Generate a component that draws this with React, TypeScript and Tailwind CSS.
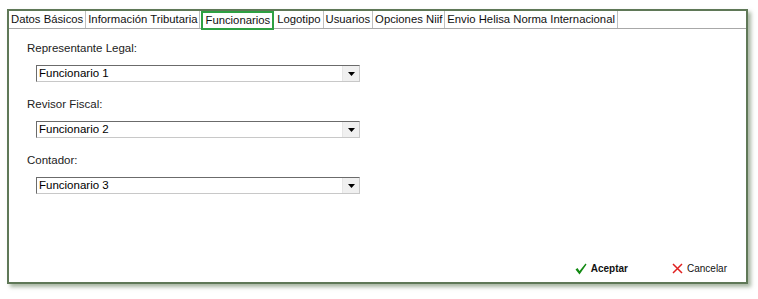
import React from 'react'

const tabs = [
  'Datos Básicos',
  'Información Tributaria',
  'Funcionarios',
  'Logotipo',
  'Usuarios',
  'Opciones Niif',
  'Envio Helisa Norma Internacional',
]

const fields = [
  { label: 'Representante Legal:', value: 'Funcionario 1' },
  { label: 'Revisor Fiscal:', value: 'Funcionario 2' },
  { label: 'Contador:', value: 'Funcionario 3' },
]

const Select = ({ value }: { value: string }) => (
  <div className="ml-[9px] flex h-[17px] w-[324px] items-center border border-t-[#6b6b6b] border-l-[#6b6b6b] border-r-[#c8c8c8] border-b-[#c8c8c8] bg-white">
    <span className="flex-1 pl-[2px] text-[11.5px] leading-none text-black">{value}</span>
    <span className="flex h-full w-[17px] items-center justify-center border-l border-[#e6e6e6] bg-[#f0f0f0]">
      <svg width="7" height="4" viewBox="0 0 7 4">
        <path d="M0 0h7L3.5 4z" fill="#000" />
      </svg>
    </span>
  </div>
)

const App = () => {
  return (
    <div className="h-[299px] w-[758px] bg-white pl-[7px] pt-[9px] font-['Liberation_Sans',Arial,sans-serif] text-[#111]">
      <div className="flex h-[275px] w-[741px] flex-col border-2 border-[#5f7857] bg-white shadow-[3px_3px_4px_rgba(95,120,85,0.55)]">
        {/* tabs */}
        <div className="flex h-[18px] items-stretch border-b border-[#a8a8a8] text-[11.3px]">
          {tabs.map((t) => {
            const active = t === 'Funcionarios'
            return (
              <div
                key={t}
                className={
                  active
                    ? 'mx-[1px] -mb-[2px] flex items-center border-2 border-[#2ea043] px-[2px]'
                    : 'flex items-center border-r border-[#c0c0c0] px-[2px]'
                }
              >
                {t}
              </div>
            )
          })}
        </div>

        {/* form */}
        <div className="flex flex-1 flex-col pl-[18px] pt-[12px]">
          {fields.map((f) => (
            <div key={f.label} className="mb-[15px] flex flex-col">
              <div className="mb-[10px] text-[11.5px] leading-[14px] text-[#222]">{f.label}</div>
              <Select value={f.value} />
            </div>
          ))}
        </div>

        {/* actions */}
        <div className="flex justify-end gap-[44px] pb-[6px] pr-[19px] text-[10px]">
          <button className="flex items-center gap-[4px] font-bold text-[#111]">
            <svg width="12" height="12" viewBox="0 0 12 12">
              <path d="M0.5 6.5 L2.5 5 L4.5 8 L10.5 0.5 L11.5 1.5 L4.5 11.5 Z" fill="#138a13" />
            </svg>
            Aceptar
          </button>
          <button className="flex items-center gap-[4px] text-[#111]">
            <svg width="11" height="11" viewBox="0 0 11 11">
              <path d="M1 1 L10 10 M10 1 L1 10" stroke="#e02020" strokeWidth="1.5" />
            </svg>
            Cancelar
          </button>
        </div>
      </div>
    </div>
  )
}

export default App
